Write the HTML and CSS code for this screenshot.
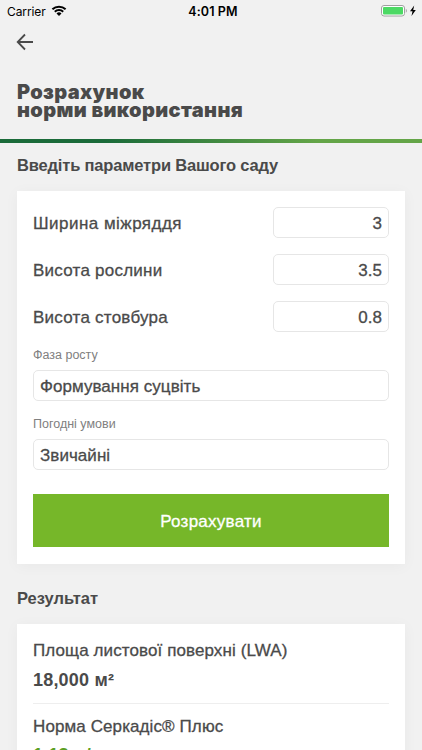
FILE: index.html
```
<!DOCTYPE html>
<html lang="uk">

<head>
    <meta charset="UTF-8">
    <meta name="viewport" content="width=device-width, initial-scale=1.0">
    <title>Розрахунок норми використання</title>
    <link rel="stylesheet" href="styles.css">
</head>

<body>

    <div class="status-bar">
        <div class="carrier">
            <span>Carrier</span>
            <svg width="16" height="12" viewBox="0 0 16 12">
                <path d="M1.4 4.3a9.5 9.5 0 0 1 13.2 0M3.8 6.7a6 6 0 0 1 8.4 0" fill="none" stroke="#000" stroke-width="2" />
                <path d="M8 11 5.5 8.6a3.5 3.5 0 0 1 5 0z" />
            </svg>
        </div>
        <span class="time">4:01 PM</span>
        <svg class="battery" width="38" height="12" viewBox="0 0 38 12">
            <rect x="0.5" y="0.5" width="23" height="10.5" rx="2.5" fill="#fff" stroke="#a0a0a0" />
            <rect x="2" y="2" width="20" height="7.5" rx="1" fill="#4cd964" />
            <path d="M24.8 3.8c1.4.5 1.4 3.4 0 3.9z" fill="#a0a0a0" />
            <path d="M33.2.6 29 6.3h2.5l-1 4.6 4.3-5.8h-2.6z" />
        </svg>
    </div>

    <header>
        <a class="back" href="#" aria-label="Назад">
            <svg width="18" height="18" viewBox="0 0 18 18">
                <path d="M17 9H2M9 1.5 1.7 9 9 16.5" fill="none" stroke="#4a4a4a" stroke-width="1.8" />
            </svg>
        </a>
        <h1>Розрахунок<br>норми використання</h1>
    </header>

    <main>
        <h2 class="params-title">Введіть параметри Вашого саду</h2>

        <form class="card">
            <label class="row">
                <span class="label-width">Ширина міжряддя</span>
                <input type="text" value="3">
            </label>
            <label class="row">
                <span>Висота рослини</span>
                <input type="text" value="3.5">
            </label>
            <label class="row">
                <span>Висота стовбура</span>
                <input type="text" value="0.8">
            </label>

            <label class="field">
                <span>Фаза росту</span>
                <input type="text" value="Формування суцвіть">
            </label>
            <label class="field">
                <span>Погодні умови</span>
                <input type="text" value="Звичайні">
            </label>

            <button type="button">Розрахувати</button>
        </form>

        <h2 class="result-title">Результат</h2>

        <section class="card results">
            <div class="result">
                <p>Площа листової поверхні (LWA)</p>
                <strong>18,000 м²</strong>
            </div>
            <div class="result">
                <p>Норма Серкадіс® Плюс</p>
                <strong class="green">1.13 л/га</strong>
            </div>
        </section>
    </main>

</body>

</html>
```
FILE: styles.css
```
* {
    box-sizing: border-box;
}

body {
    margin: 0;
    height: 750px;
    overflow: hidden;
    background: #f1f1f1;
    color: #4a4a4a;
    font-family: "Liberation Sans", Arial, sans-serif;
}

.status-bar {
    display: grid;
    grid-template-columns: 1fr auto 1fr;
    align-items: center;
    height: 22px;
    padding: 0 3px 0 7px;
    color: #000;
    font-family: Inter, sans-serif;
    font-size: 12px;

    .carrier {
        display: flex;
        align-items: center;
        gap: 5px;
        letter-spacing: -0.1px;
    }

    .time {
        font-weight: 600;
        font-size: 12.5px;
        letter-spacing: 0.1px;
    }

    .battery {
        justify-self: end;
    }
}

header {
    height: 121px;
    padding: 11px 16px 0;
    border-bottom: 4px solid;
    border-image: linear-gradient(to right, #1b6b3a 25%, #64a548 75%) 1;
}

.back {
    display: block;
    height: 18px;
}

h1 {
    margin: 32px 0 0 1px;
    font-family: Inter, sans-serif;
    font-weight: 900;
    font-size: 20px;
    line-height: 18px;
    letter-spacing: 0.35px;
    white-space: nowrap;
}

h2 {
    margin: 0;
    font-size: 16.5px;
    line-height: 20px;
}

main {
    padding: 12px 17px 0;
}

.params-title {
    letter-spacing: -0.17px;
}

.card {
    margin-top: 16px;
    padding: 16px 16px 17px;
    background: #fff;
    box-shadow: 0 2px 14px rgba(0, 0, 0, 0.04);
}

.row {
    display: flex;
    justify-content: space-between;
    align-items: center;
    margin-bottom: 16px;
    font-size: 17px;
    letter-spacing: 0.24px;
    -webkit-text-stroke: 0.3px #4a4a4a;

    span {
        padding-top: 2px;
    }

    .label-width {
        letter-spacing: 0.47px;
    }

    input {
        width: 116px;
        text-align: right;
    }
}

input {
    height: 31px;
    padding: 2px 6px 0;
    border: 1px solid #e6e6e6;
    border-radius: 5px;
    background: #fff;
    color: #4a4a4a;
    font: 17px "Liberation Sans", Arial, sans-serif;
    -webkit-text-stroke: 0.3px #4a4a4a;
}

.field {
    display: block;
    margin-bottom: 16px;

    span {
        display: block;
        margin-bottom: 7px;
        color: #808080;
        font-size: 12.5px;
        line-height: 15px;
    }

    input {
        display: block;
        width: 100%;
        letter-spacing: 0.05px;
    }
}

button {
    display: block;
    width: 100%;
    height: 53px;
    margin-top: 24px;
    padding: 2px 0 0;
    border: 0;
    background: #76b729;
    color: #fff;
    font: 17px "Liberation Sans", Arial, sans-serif;
    letter-spacing: 0.25px;
    -webkit-text-stroke: 0.3px #fff;
}

.result-title {
    margin-top: 24px;
}

.results {
    padding-top: 17px;
}

.result {
    padding-bottom: 12px;
    margin-bottom: 13px;
    border-bottom: 1px solid #eee;

    p {
        margin: 0 0 8px;
        font-size: 17px;
        line-height: 20px;
        letter-spacing: 0.1px;
        -webkit-text-stroke: 0.3px #4a4a4a;
    }

    strong {
        display: block;
        font-size: 18px;
        line-height: 22px;
        letter-spacing: 0.2px;
    }

    .green {
        line-height: 20px;
        color: #5c9f24;
    }
}
```
